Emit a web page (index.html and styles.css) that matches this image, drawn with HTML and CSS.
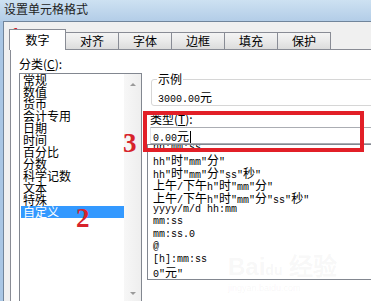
FILE: index.html
```html
<!DOCTYPE html>
<html lang="zh-CN">
<head>
  <meta charset="UTF-8">
  <title>设置单元格格式</title>
  <link rel="stylesheet" href="styles.css">
</head>
<body>

<div class="window">
  <div class="titlebar">设置单元格格式</div>

  <div class="frame">
    <div class="tabs">
      <div class="tab active">数字</div>
      <div class="tab">对齐</div>
      <div class="tab">字体</div>
      <div class="tab">边框</div>
      <div class="tab">填充</div>
      <div class="tab">保护</div>
    </div>

    <div class="panel">
      <div class="left">
        <div class="label">分类(<u>C</u>):</div>
        <div class="catlist">
          <div class="cats">
            <div class="cat">常规</div>
            <div class="cat">数值</div>
            <div class="cat">货币</div>
            <div class="cat">会计专用</div>
            <div class="cat">日期</div>
            <div class="cat">时间</div>
            <div class="cat">百分比</div>
            <div class="cat">分数</div>
            <div class="cat">科学记数</div>
            <div class="cat">文本</div>
            <div class="cat">特殊</div>
            <div class="cat selected">自定义</div>
          </div>
          <div class="scroll">
            <span class="arrow up"></span>
            <span class="arrow down"></span>
          </div>
        </div>
      </div>

      <div class="right">
        <fieldset class="sample">
          <legend>示例</legend>
          <div class="sample-value mono">3000.00<span class="c">元</span></div>
        </fieldset>

        <div class="typelabel">类型(<u>T</u>):</div>
        <div class="input mono">0.00<span class="c">元</span><span class="caret"></span></div>

        <div class="fmtlist">
          <div class="fmt-rows mono">
            <div class="row">hh:mm:ss</div>
            <div class="row">hh"<span class="c">时</span>"mm"<span class="c">分</span>"</div>
            <div class="row">hh"<span class="c">时</span>"mm"<span class="c">分</span>"ss"<span class="c">秒</span>"</div>
            <div class="row"><span class="c">上午</span>/<span class="c">下午</span>h"<span class="c">时</span>"mm"<span class="c">分</span>"</div>
            <div class="row"><span class="c">上午</span>/<span class="c">下午</span>h"<span class="c">时</span>"mm"<span class="c">分</span>"ss"<span class="c">秒</span>"</div>
            <div class="row">yyyy/m/d hh:mm</div>
            <div class="row">mm:ss</div>
            <div class="row">mm:ss.0</div>
            <div class="row">@</div>
            <div class="row">[h]:mm:ss</div>
            <div class="row">0"<span class="c">元</span>"</div>
          </div>
        </div>
      </div>
    </div>
  </div>

  <!-- annotations drawn over the dialog -->
  <div class="watermark">Bai<span class="paw">du</span> 经验<div class="wm-url">jingyan.baidu.com</div></div>
  <div class="highlight-box"></div>
  <div class="num n1">1</div>
  <div class="num n2">2</div>
  <div class="num n3">3</div>
</div>

</body>
</html>
```

FILE: styles.css
```css
body {
  margin: 0;
  width: 371px;
  height: 301px;
  overflow: hidden;
  background: #a9c6e4;
  font-family: "Noto Sans CJK SC", sans-serif;
  font-size: 12px;
  color: #000;
}

.window {
  position: relative;
  width: 420px;
  height: 301px;
}

.titlebar {
  height: 21px;
  line-height: 18px;
  padding-left: 4px;
  background: linear-gradient(#cde1f2, #b3cde7);
  color: #1e1e1e;
}

.frame {
  margin-left: 3px;
  height: 280px;
  border-top: 1px solid #71859b;
  border-left: 1px solid #71859b;
  background: #f0f0f0;
}

.tabs {
  display: flex;
  align-items: flex-end;
  height: 20px;
  padding: 7px 0 0 5px;
}

.tab {
  width: 52px;
  height: 16px;
  line-height: 16px;
  margin-left: -1px;
  border: 1px solid #898c95;
  border-bottom: 0;
  background: linear-gradient(#f4f4f4, #ebebeb 45%, #dcdcdc);
  text-align: center;
}

.tab.active {
  position: relative;
  z-index: 1;
  width: 55px;
  height: 20px;
  line-height: 20px;
  margin-left: 0;
  margin-bottom: -1px;
  background: #fff;
}

.panel {
  display: flex;
  height: 260px;
  margin-left: 6px;
  border-top: 1px solid #898c95;
  border-left: 1px solid #898c95;
  background: #fff;
}

.left {
  padding-left: 8px;
}

.label {
  height: 14px;
  margin-top: 7px;
  line-height: 14px;
}

.catlist {
  display: flex;
  width: 121px;
  height: 235px;
  margin-top: 2px;
  border: 1px solid #828790;
}

.cats {
  width: 104px;
  line-height: 12px;
}

.cat {
  height: 12px;
  margin-left: 1px;
  padding-left: 2px;
  white-space: nowrap;
}

.cat.selected {
  background: #3399ff;
  color: #fff;
}

.scroll {
  display: flex;
  flex-direction: column;
  justify-content: space-between;
  align-items: center;
  width: 17px;
  padding: 9px 0 14px;
  box-sizing: border-box;
  background: linear-gradient(90deg, #f7f7f7, #eeeeee);
}

.arrow {
  width: 0;
  height: 0;
  border-left: 3px solid transparent;
  border-right: 3px solid transparent;
}

.arrow.up {
  border-bottom: 3px solid #9a9a9a;
}

.arrow.down {
  border-top: 3px solid #9a9a9a;
}

.right {
  flex: 1;
  margin-left: 5px;
}

.mono {
  font-family: "Liberation Mono", monospace;
  font-size: 10px;
  white-space: nowrap;
}

.c {
  font-family: "Noto Sans CJK SC", sans-serif;
  font-size: 12px;
}

.sample {
  margin: 22px 0 0 4px;
  padding: 0 6px 2px;
  border: 1px solid #d6d6d6;
  border-radius: 3px;
}

.sample legend {
  margin-left: -1px;
  padding: 0 1px;
  line-height: 14px;
}

.sample-value {
  height: 12px;
  padding-top: 5px;
  line-height: 12px;
}

.typelabel {
  margin: 6px 0 0 3px;
  line-height: 14px;
}

.input {
  height: 15px;
  margin: 1px 0 0 3px;
  padding-left: 2px;
  line-height: 15px;
  border: 1px solid #abadb3;
  border-color: #abadb3 #e3e9ef #abadb3 #e2e3ea;
}

.caret {
  display: inline-block;
  width: 1px;
  height: 12px;
  margin-left: 1px;
  vertical-align: -2px;
  background: #000;
}

.fmtlist {
  height: 134px;
  border: 1px solid #828790;
  overflow: hidden;
}

.fmt-rows {
  margin-top: -3px;
  padding-left: 5px;
}

.row {
  height: 12.4px;
  line-height: 12.4px;
  white-space: pre;
}

.watermark {
  position: absolute;
  left: 228px;
  top: 254px;
  font-family: "Liberation Sans", sans-serif;
  font-size: 24px;
  font-weight: bold;
  line-height: 26px;
  color: rgba(150, 150, 150, 0.08);
}

.watermark .paw {
  font-size: 14px;
}

.wm-url {
  font-size: 9px;
  line-height: 10px;
  font-weight: normal;
}

.highlight-box {
  position: absolute;
  left: 143px;
  top: 111px;
  width: 221px;
  height: 41px;
  box-sizing: border-box;
  border: 4px solid #e21f27;
}

.num {
  position: absolute;
  font-family: "Liberation Serif", serif;
  font-weight: bold;
  font-size: 27px;
  line-height: 1;
  color: #d7232b;
}

.n1 {
  left: 8px;
  top: 24px;
}

.n2 {
  left: 76px;
  top: 205px;
}

.n3 {
  left: 123px;
  top: 130px;
}
```
